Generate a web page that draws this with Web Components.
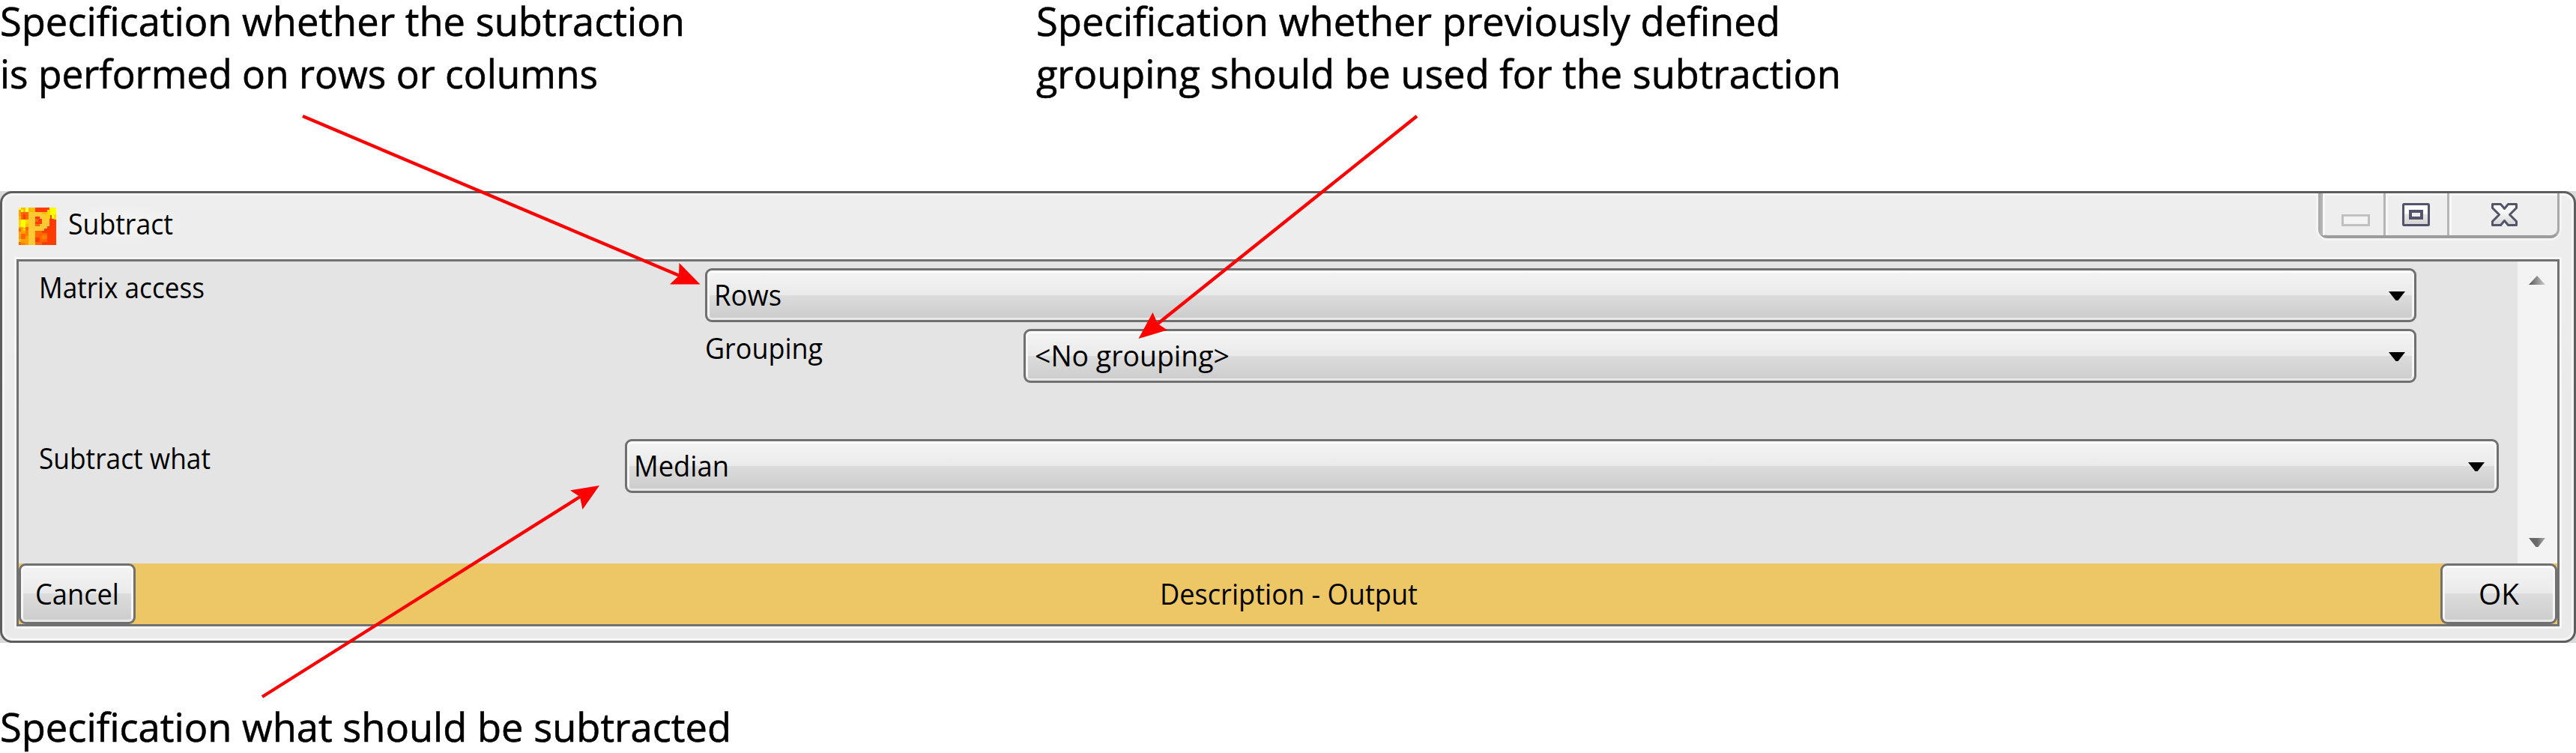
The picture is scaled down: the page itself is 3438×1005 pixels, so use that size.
<!DOCTYPE html>
<html lang="en">
<head>
<meta charset="utf-8">
<title>Subtract</title>
<style>
html,body{margin:0;background:#fff}
body{width:3438px;height:1005px;overflow:hidden;font-family:"Open Sans","Noto Sans",sans-serif;color:#000}
</style>
</head>
<body>
<subtract-page></subtract-page>
<script>
const define = (name, html, setup) => customElements.define(name, class extends HTMLElement {
  connectedCallback() {
    if (this.shadowRoot) return;
    const t = document.createElement('template');
    t.innerHTML = html;
    this.attachShadow({mode: 'open'}).append(t.content.cloneNode(true));
    if (setup) setup(this, this.shadowRoot);
  }
});

/* One line of text, condensed or widened to the width given in "w". */
define('fit-text', `<style>
:host{display:block;flex:none;white-space:nowrap;line-height:inherit}
span{display:inline-block;transform-origin:0 50%}
</style><span></span>`, (el, root) => {
  const s = root.querySelector('span'), w = +el.getAttribute('w');
  s.textContent = el.getAttribute('text');
  el.style.width = w + 'px';
  s.style.transform = `scaleX(${w / s.getBoundingClientRect().width})`;
});

define('note-text', `<style>
:host{display:block;font-size:52.5px;line-height:56px;-webkit-text-stroke:.6px #000}
::slotted(fit-text:nth-child(2)){line-height:84px}
</style><slot></slot>`);

define('app-icon', `<style>:host{display:block;width:50px;height:50px}svg{display:block}</style>
<svg width="50" height="50" viewBox="0 0 50 50" shape-rendering="crispEdges">
<rect width="50" height="50" fill="#ff3c00"/>
<path fill="#ffa000" d="M0 0h22v50H0z"/>
<path fill="#ffbf00" d="M3 0h19v6H3zM12 6h10v6H12zM0 12h3v5H0zM9 16h4v10H9zM31 6h7v3h-7zM0 42h3v6H0z"/>
<path fill="#ffff50" d="M0 0h3v3H0zM9 0h4v6H9z"/>
<path fill="#ffff00" d="M3 3h3v3H3zM41 0h9v10h-9zM44 10h3v5h-3zM3 16h6v10H3zM6 22h3v5H6z"/>
<path fill="#ffd800" d="M38 3h4v12h-4zM47 9h3v7h-3zM0 17h3v9H0zM6 28h6v3H6zM9 16h4v6H9z"/>
<path fill="#ff6600" d="M3 6h10v6H3zM3 12h10v4H3zM9 26h4v5H9zM0 28h3v4H0zM3 35h6v7H3zM0 46h3v4H0zM22 31h9v19h-9zM31 34h7v12h-7z"/>
<path fill="#ff3c00" d="M6 9h3v7H6zM22 0h16v6H22zM22 40h6v6h-6zM6 12h3v4H6z"/>
<path fill="#ff8000" d="M31 37h7v5h-7zM9 31h4v7H9zM3 47h6v3H3z"/>
<path fill="#ffc933" fill-rule="evenodd" d="M13 6H31V9H38V15H41V25H38V28H34V31H22V50H13zM22 12V25H28V22H31V15H28V12z"/>
<path fill="#ff3c00" d="M22 12h6v3h-6zM22 15h9v7h-9zM22 22h6v3h-6z"/>
<path fill="#ff6600" d="M22 15h4v4h-4zM22 22h6v3h-6z"/>
</svg>`);

define('caption-buttons', `<style>
:host{display:flex;box-sizing:border-box;width:322px;height:60px;border:3px solid #aaa;border-top:0;border-bottom:4px solid #9c9c9c;
 border-radius:0 0 12px 12px;box-shadow:0 3px 0 #f5f5f5,-3px 0 0 #f4f4f4,3px 0 0 #f4f4f4,inset 0 3px 0 #f8f8f8;background:#eee}
div{box-sizing:border-box;border-left:3px solid #b4b4b4;box-shadow:inset 3px 3px 0 #f7f7f7;height:56px}
div:first-child{border:0;width:85px;box-shadow:inset 0 3px 0 #f7f7f7}
div:nth-child(2){width:84px}
div:nth-child(3){flex:1}
svg{display:block}
</style>
<div><svg width="85" height="56"><rect x="26.5" y="29.5" width="35" height="13" fill="#f4f4f4" stroke="#c0c0c0" stroke-width="3"/></svg></div>
<div><svg width="81" height="56"><defs><linearGradient id="g" x2="0" y2="1"><stop stop-color="#fff"/><stop offset=".45" stop-color="#fafafa"/><stop offset=".5" stop-color="#e6e6e6"/><stop offset="1" stop-color="#d2d2d2"/></linearGradient></defs>
<rect x="23.5" y="14.5" width="34" height="28" rx="1" fill="url(#g)" stroke="#53536a" stroke-width="3"/><rect x="33" y="24" width="15" height="9" fill="#eee" stroke="#53536a" stroke-width="4"/></svg></div>
<div><svg width="144" height="56"><defs><linearGradient id="x" x2="0" y2="1"><stop stop-color="#fff"/><stop offset=".45" stop-color="#f4f4f4"/><stop offset="1" stop-color="#d2d2d2"/></linearGradient></defs>
<path fill="url(#x)" stroke="#53536a" stroke-width="3" stroke-linejoin="round" d="M57.500 14.500H68.500L73.500 20.500L78.500 14.500H89.500V19.500L80.500 28.500L89.500 37.500V42.500H78.500L73.500 36.500L68.500 42.500H57.500V37.500L66.500 28.500L57.500 19.500z"/></svg></div>`);

const face = `box-sizing:border-box;border:3px solid #707070;border-radius:9px;
 box-shadow:inset 0 3px 0 #fff,inset 0 -3px 0 #e8e8e8,inset 3px 0 0 #f6f6f6,inset -3px 0 0 #f6f6f6;
 background:linear-gradient(#f3f3f3 3px,#eaeaea 50%,#dcdcdc 50%,#cdcdcd calc(100% - 3px));`;

define('combo-box', `<style>
:host{display:flex;align-items:center;justify-content:space-between;height:72px;padding:0 12px 0 3px;${face}line-height:50px}
svg{display:block;flex:none;margin-top:1px}
</style><slot></slot><svg width="22" height="12"><path d="M0 0H22L12.500 12H9.500z"/></svg>`);

define('push-button', `<style>
:host{display:flex;align-items:center;justify-content:center;height:81px;${face}line-height:50px}
</style><slot></slot>`);

define('scroll-bar', `<style>
:host{display:flex;flex-direction:column;justify-content:space-between;align-items:center;box-sizing:border-box;width:53px;height:403px;padding:19px 1px 22px 0;background:#f3f3f3}
svg{display:block}
</style><svg width="22" height="12"><defs><linearGradient id="u"><stop stop-color="#555"/><stop offset="1" stop-color="#ccc"/></linearGradient></defs><path fill="url(#u)" d="M0 12L11 0L22 12z"/></svg>
<svg width="22" height="12"><defs><linearGradient id="d"><stop stop-color="#666"/><stop offset=".5" stop-color="#6a6a6a"/><stop offset="1" stop-color="#aaa"/></linearGradient></defs><path fill="url(#d)" d="M0 0H22L12.500 12H9.500z"/></svg>`);

define('dialog-window', `<style>
:host{display:block;height:603px;background:#dadada;font-size:37.5px;line-height:50px}
.frame{box-sizing:border-box;height:603px;border:3px solid #5d5d5d;border-radius:16px;padding:0 16px 16px;
 background:linear-gradient(#eee,#ededed 85px,#eaeaea 300px,#eaeaea);box-shadow:inset 0 0 0 3px #f6f6f6}
.title{display:flex;height:85px;align-items:flex-start}
app-icon{margin:19px 0 0 6px}
.name{margin:16px auto 0 0;padding:0 16px;background:radial-gradient(closest-side,#f6f6f6,#f6f6f600)}
caption-buttons{margin-right:3px}
.client{box-sizing:border-box;height:490px;margin:3px;border:3px solid #717171;box-shadow:0 0 0 3px #f6f6f6;background:#e4e4e4}
.body{display:flex;height:403px}
.form{flex:1;padding-top:9px}
.row{display:flex;align-items:flex-start}
.label{flex:none;box-sizing:border-box;padding:1px 0 0 27px}
.sub{display:flex;flex-direction:column;gap:9px;width:2284px}
.foot{display:flex;height:81px;background:#edc766}
.foot .mid{flex:1;display:flex;align-items:center;justify-content:center;padding-left:2px}
</style>
<div class="frame">
 <div class="title"><app-icon></app-icon><div class="name"><fit-text text="Subtract" w="140"></fit-text></div><caption-buttons></caption-buttons></div>
 <div class="client">
  <div class="body">
   <div class="form">
    <div class="row" style="height:228px"><div class="label" style="width:916px"><fit-text text="Matrix access" w="221"></fit-text></div>
     <div class="sub"><combo-box><fit-text style="margin-left:6px" text="Rows" w="90"></fit-text></combo-box>
      <div class="row"><div class="label" style="width:425px;padding-left:0"><fit-text text="Grouping" w="157"></fit-text></div>
      <combo-box style="flex:1"><fit-text style="margin-left:9px" text="&lt;No grouping&gt;" w="260"></fit-text></combo-box></div>
     </div></div>
    <div class="row"><div class="label" style="width:809px"><fit-text text="Subtract what" w="229"></fit-text></div>
     <combo-box style="width:2501px;padding-right:16px"><fit-text style="margin-left:6px" text="Median" w="127"></fit-text></combo-box></div>
   </div>
   <scroll-bar></scroll-bar>
  </div>
  <div class="foot"><push-button style="width:156px"><fit-text text="Cancel" w="112"></fit-text></push-button>
   <div class="mid"><fit-text text="Description - Output" w="344"></fit-text></div>
   <push-button style="width:156px"><fit-text text="OK" w="54"></fit-text></push-button></div>
 </div>
</div>`);

define('pointer-arrows', `<style>:host{display:block;position:absolute;left:0;top:0;width:3438px;height:1005px;pointer-events:none}svg{display:block}</style>
<svg width="3438" height="1005"><g stroke="#f00" stroke-width="4.400"><path d="M404 155L907 368M1891 155L1544 433M350 930L774 663"/></g>
<path fill="#f00" d="M934.500 379.500L906.500 351L906 368L894 379.500zM1519.500 452L1538.500 417L1545 432L1558 440.500zM800 648L761 654.500L774 663L777.500 680z"/></svg>`);

define('subtract-page', `<style>
:host{display:block;width:3438px;height:1005px;position:relative}
.top{display:flex;box-sizing:border-box;height:255px}
.top note-text:first-child{width:1383px}
.end{margin-top:84px}
</style>
<div class="top">
 <note-text><fit-text text="Specification whether the subtraction" w="914"></fit-text><fit-text text="is performed on rows or columns" w="798"></fit-text></note-text>
 <note-text><fit-text text="Specification whether previously defined" w="993"></fit-text><fit-text text="grouping should be used for the subtraction" w="1074"></fit-text></note-text>
</div>
<dialog-window></dialog-window>
<note-text class="end"><fit-text text="Specification what should be subtracted" w="976"></fit-text></note-text>
<pointer-arrows></pointer-arrows>`);
</script>
</body>
</html>
